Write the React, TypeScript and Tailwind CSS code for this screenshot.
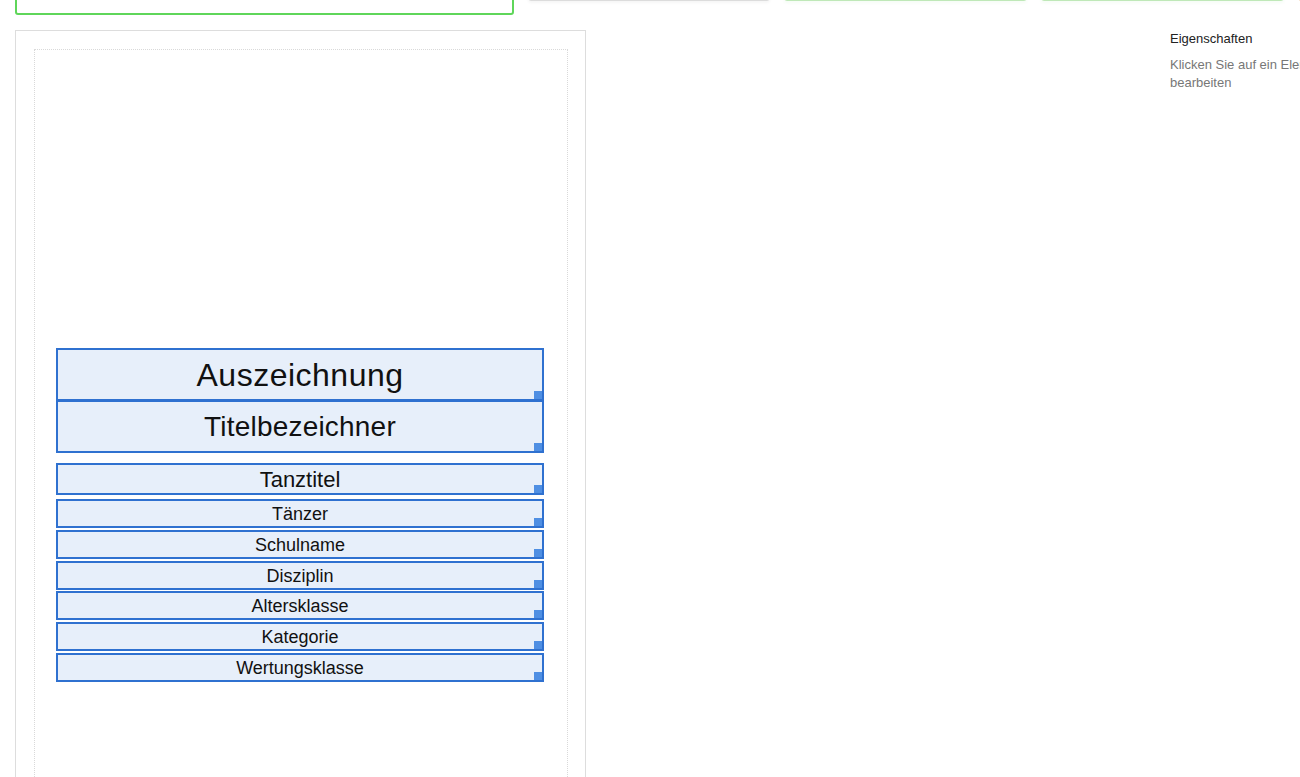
import React from "react";

type CanvasElement = {
  id: string;
  label: string;
  top: number;
  height: number;
  size: string;
};

// positions on the page canvas (px, relative to the dotted page)
const ELEMENTS: CanvasElement[] = [
  { id: "award", label: "Auszeichnung", top: 298, height: 53, size: "text-[32px] tracking-[0.5px]" },
  { id: "title", label: "Titelbezeichner", top: 350, height: 53, size: "text-[28px] tracking-[0.2px]" },
  { id: "dance", label: "Tanztitel", top: 413, height: 32, size: "text-[22px]" },
  { id: "dancer", label: "Tänzer", top: 449, height: 29, size: "text-[18px]" },
  { id: "school", label: "Schulname", top: 480, height: 29, size: "text-[18px]" },
  { id: "discipline", label: "Disziplin", top: 511, height: 29, size: "text-[18px]" },
  { id: "age", label: "Altersklasse", top: 541, height: 29, size: "text-[18px]" },
  { id: "category", label: "Kategorie", top: 572, height: 29, size: "text-[18px]" },
  { id: "class", label: "Wertungsklasse", top: 603, height: 29, size: "text-[18px]" },
];

export default function App() {
  return (
    <div className="relative h-[777px] w-[1300px] overflow-hidden bg-white font-['Liberation_Sans',Arial,sans-serif] text-[#222]">
      <Toolbar />

      <div className="mt-[15px] flex w-[1430px] items-start pl-[15px]">
        <div className="w-[571px] shrink-0 border border-[#dddddd] bg-white p-[18px]">
          <div className="relative h-[760px] w-[534px] border border-dotted border-[#d9d9d9] bg-white">
            {ELEMENTS.map((el) => (
              <CanvasBox key={el.id} element={el} />
            ))}
          </div>
        </div>

        <div className="flex-1" />

        <aside className="w-[260px] shrink-0 pt-px">
          <h3 className="text-[13px] leading-[15px] text-[#222]">Eigenschaften</h3>
          <p className="mt-[10px] text-[13px] leading-[18px] text-[#777]">
            Klicken Sie auf ein Element, um es zu bearbeiten
          </p>
        </aside>
      </div>
    </div>
  );
}

function Toolbar() {
  return (
    <div className="-mt-[45px] flex h-[60px] items-start gap-[14px] pl-[15px]">
      <div className="h-[60px] w-[499px] shrink-0 rounded-[3px] border-2 border-[#5fd65a] bg-white" />
      <div className="h-[46px] w-[242px] shrink-0 rounded-[3px] border border-[#dcdcdc] bg-white shadow-[0_2px_3px_rgba(0,0,0,0.04)]" />
      <div className="h-[46px] w-[243px] shrink-0 rounded-[3px] border border-[#bfe8b8] bg-white shadow-[0_2px_3px_rgba(80,200,80,0.06)]" />
      <div className="h-[46px] w-[243px] shrink-0 rounded-[3px] border border-[#bfe8b8] bg-white shadow-[0_2px_3px_rgba(80,200,80,0.06)]" />
      <div className="h-[46px] w-[243px] shrink-0 rounded-[3px] border border-[#f3c9a0] bg-white" />
    </div>
  );
}

function CanvasBox({ element }: { element: CanvasElement }) {
  return (
    <div
      className="absolute left-[21px] flex w-[488px] items-center justify-center overflow-hidden border-2 border-[#2f71d0] bg-[#e7effa] pt-[2px]"
      style={{ top: element.top, height: element.height }}
    >
      <span className={`block whitespace-nowrap leading-[1.15] text-[#111] ${element.size}`}>
        {element.label}
      </span>
      <span className="absolute right-0 bottom-0 h-[8px] w-[8px] bg-[#4f8fe3]" />
    </div>
  );
}
